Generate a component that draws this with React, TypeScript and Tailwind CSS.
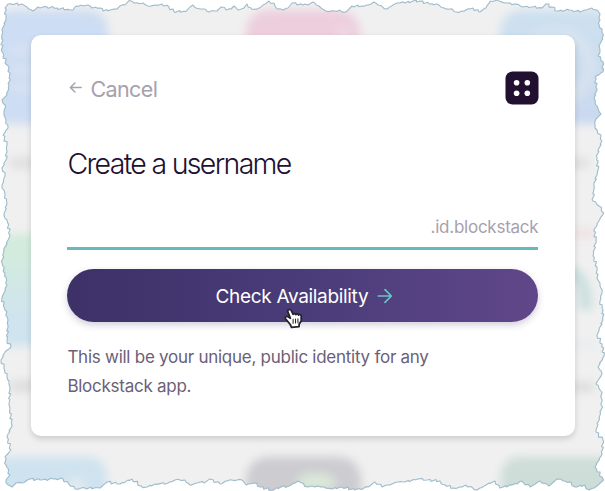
const edge: [number, number][] = [
  [5,8],[8,4],[22,4],[27,7],[33,11],[38,7],[47,7],[57,8],[70,10],[73,10],[76,6],[83,6],[88,5],[92,8],[100,8],[103,11],[117,9],[120,6],[125,5],[129,0.5],[134,3],[143,3],[148,6],[156,5],[162,4],[169,7],[174,11.5],[186,11.5],[190,7],[193,5],[196,8],[200,9],
  [203,9],[209,12],[214,11],[217,11],[221,7],[226,10],[231,9],[234,6],[238,10],[244,8],[247,4],[251,8],[255,9],[259,8],[265,4],[269,1],[275,6],[277,9],[281,9],[283,10],[288,8],[292,3],[297,5],[303,5],[305,4],[308,5],[313,2],[319,6],[326,11],[335,11],[340,10],[346,12],[352,6],[362,6],[367,5],[371,4],[374,2],[378,5],[387,9],[393,5],[399,3],
  [405,3],[413,1],[420,1],[429,4],[437,4],[444,8],[453,10],[457,12],[462,11],[473,8],[479,12],[486,8],[490,1],[499,1],[505,3],[515,4],[523,7],[532,7],[542,8],[546,4],[552,7],[558,11],[569,10],[580,12],[585,10],[592,8],[598,11],[600,14],
  [600,20],[599,24],[602,29],[603.5,35],[601,42],[599,46],[600,52],[598,56],[603,62],[602,68],[603,72],[595,77],[597,89],[594,98],[597,106],[601,114],[596,119],[595,124],[597,130],[601,135],[602,141],[599,148],[597,157],[598,170],[594,185],[593,201],[599,206],[603.5,213],[597,224],[594,231],[596,240],[593,256],[597,267],[597,278],[600,283],[602,293],[600,301],[603,310],[603,320],[597,335],[602,344],[604,356],[598,367],[602,374],[596,384],[601,391],[602,406],[599,418],[596,432],[603,440],[602,454],[595,467],[602,477],[603.5,480],
  [597,486],[589,490],[585,485],[575,487],[571,482],[565,481],[561,479],[557,479],[549,486],[540,481],[530,487],[521,481],[517,484],[512,485],[503,487],[500,488],[495,481],[486,485],[477,490],[466,485],[460,487],[454,488],[445,485],[440,481],[427,480],[418,479],[405,482],
  [398,482],[388,485],[382,487],[375,482],[368,487],[360,489],[355,490],[342,487],[332,489],[324,487],[318,486],[308,487],[298,481],[289,486],[281,487],[272,490],[260,487],[254,483],[246,485],[242,480],[232,480],[227,481],[220,484],[210,479],[204,483],[200,482],
  [197,483],[190,485],[185,480],[175,480],[168,483],[155,484],[147,487],[141,486],[132,479],[120,484],[107,482],[100,488],[85,488],[75,489],[63,479],[53,479],[40,480],[30,479],[22,483],[16,483],[12,487],[7,484],[6,480],
  [10,475],[6,465],[5,457],[11,450],[7,437],[12,425],[9,405],[10,390],[9,384],[7,377],[4,368],[1,360],[5,352],[11,347],[7,340],[8,320],[5,310],[2,298],[7,285],[5,273],[2,263],[4,250],[10,235],[7,220],[4,215],[7,204],[5,195],[2,185],[5,176],[2,168],[6,160],[7,145],[3,135],[8,128],[6,120],[4,115],[5,105],[2,100],[7,95],[9,85],[10,73],[7,65],[2,52],[2,30],[6,20],
];

// Break long segments into small, repeatable nicks so the paper looks torn.
function tear(points: [number, number][]) {
  const out: string[] = [];
  points.forEach(([x, y], i) => {
    const [nx, ny] = points[(i + 1) % points.length];
    const steps = Math.max(1, Math.round(Math.hypot(nx - x, ny - y) / 2.6));
    out.push(`${x} ${y}`);
    for (let s = 1; s < steps; s++) {
      const wobble = Math.sin(i * 12.9 + s * 2.6) * 1.1;
      const px = x + ((nx - x) * s) / steps + wobble;
      const py = y + ((ny - y) * s) / steps - wobble;
      out.push(`${px.toFixed(1)} ${py.toFixed(1)}`);
    }
  });
  return `M${out.join("L")}Z`;
}

const outline = tear(edge);

function Backdrop() {
  return (
    <svg className="absolute inset-0" width="605" height="491" viewBox="0 0 605 491">
      <defs>
        <clipPath id="paper"><path d={outline} /></clipPath>
        <filter id="soft" x="-30%" y="-30%" width="160%" height="160%"><feGaussianBlur stdDeviation="5" /></filter>
        <linearGradient id="mint" x1="0" y1="0" x2="0" y2="1">
          <stop offset=".15" stopColor="#d2ebdc" /><stop offset=".75" stopColor="#cfe4ef" />
        </linearGradient>
        <linearGradient id="sky" x1="0" y1="0" x2="0" y2="1">
          <stop offset=".2" stopColor="#cce0ef" /><stop offset="1" stopColor="#c9d8ef" />
        </linearGradient>
      </defs>
      <g clipPath="url(#paper)">
        <rect width="605" height="491" fill="#f0f0f0" />
        <g filter="url(#soft)">
          <rect x="-8" y="10" width="116" height="114" rx="20" fill="#cdddf3" />
          <path d="M8 50h30M8 70h30M8 88h30" stroke="#d8e3f4" strokeWidth="8" />
          <rect x="246" y="10" width="114" height="112" rx="22" fill="#edcedd" />
          <circle cx="344" cy="34" r="8" fill="#f0d8e3" />
          <rect x="500" y="10" width="116" height="114" rx="22" fill="url(#sky)" />
          <circle cx="556" cy="66" r="34" fill="none" stroke="#d7e2ef" strokeWidth="13" />
          <rect x="-8" y="234" width="116" height="112" rx="18" fill="url(#mint)" />
          <path d="M10 163H70" stroke="#dfdfdf" strokeWidth="11" />
          <path d="M10 386H70" stroke="#dddddd" strokeWidth="11" />
          <path d="M548 163H588" stroke="#dedede" strokeWidth="10" />
          <path d="M548 387H594" stroke="#dddddd" strokeWidth="10" />
          <path d="M545 233H596" stroke="#f0dfe1" strokeWidth="8" />
          <path d="M563 272Q586 270 586 310" fill="none" stroke="#cadedf" strokeWidth="13" />
          <path d="M550 345H595" stroke="#e5edee" strokeWidth="7" />
          <rect x="-8" y="457" width="115" height="80" rx="18" fill="#cee3ef" />
          <circle cx="76" cy="486" r="9" fill="#e4eaee" />
          <rect x="246" y="457" width="115" height="80" rx="22" fill="#ccccd1" />
          <ellipse cx="316" cy="482" rx="20" ry="9" fill="#dbe8d9" />
          <rect x="501" y="457" width="115" height="80" rx="18" fill="#cdddd8" />
        </g>
      </g>
      <path d={outline} fill="none" stroke="#9ebccb" strokeWidth="1.1" strokeLinejoin="bevel" />
    </svg>
  );
}

function Arrow({ className, d, size }: { className: string; d: string; size: number }) {
  return (
    <svg className={className} width={size} height={size} viewBox="0 0 16 16" fill="none" stroke="currentColor" strokeLinecap="round" strokeLinejoin="round">
      <path d={d} />
    </svg>
  );
}

function HandCursor() {
  return (
    <svg className="absolute left-[283px] top-[308px]" width="20" height="21" viewBox="0 0 19 21" preserveAspectRatio="none">
      <path d="M6 1.5C4.6 1.5 4.2 2.8 4.7 4L7 10.3 4.8 8.8C3.3 7.8 1.4 9.3 2.4 10.8L6.7 16.2 8.1 19.3 15.2 18.6 15.4 16 17.3 13V7.7C17 6.3 15.3 6.1 14.8 7.2 14.5 5.7 12.7 5.5 12.2 6.7 11.5 5.3 10.1 5.5 9.6 6.3L7.9 2.7C7.5 1.9 6.9 1.5 6 1.5Z" fill="#fff" stroke="#252229" strokeWidth="1.7" strokeLinejoin="round" />
      <path d="M9.6 11.3v4M11.9 11v4M14.2 10.8v4" stroke="#252229" strokeWidth="1" strokeLinecap="round" />
    </svg>
  );
}

export default function App() {
  return (
    <main className="relative h-[491px] w-[605px] overflow-hidden bg-white px-[31px] pt-[35px] font-['Inter',sans-serif]">
      <Backdrop />
      <section className="relative h-[401px] w-[544px] rounded-[10px] bg-white pl-[36.4px] pr-9 pt-9 shadow-[0_3px_6px_rgba(0,0,0,0.15)]">
        <header className="flex h-[34px] items-center justify-between">
          <button className="flex items-center gap-[7px] pl-[1px] text-[#a7a1ad]">
            <Arrow className="mb-px stroke-[1.6]" size={15} d="M14 8H2.5M7.4 3.2 2.5 8l4.9 4.8" />
            <span className="pt-px text-[21.5px] leading-[34px] tracking-[-0.6px]">Cancel</span>
          </button>
          <svg className="mr-[0.5px]" width="34" height="34" viewBox="0 0 34 34">
            <rect x=".5" y=".5" width="33" height="33" rx="7" fill="#211030" />
            <g fill="#fff"><circle cx="11.6" cy="11.7" r="2.8" /><circle cx="22.3" cy="11.7" r="2.8" /><circle cx="11.6" cy="22.3" r="2.8" /><circle cx="22.3" cy="22.3" r="2.8" /></g>
          </svg>
        </header>
        <h1 className="mt-[41px] h-9 whitespace-nowrap text-[28.5px] font-light leading-9 tracking-[-1.68px] text-[#211030]">Create a username</h1>
        <div className="mt-[26px] flex h-[42px] w-[471px] items-start justify-end border-b-[3px] border-[#67b9bd] pt-[7px] text-[17px] leading-6 tracking-[-0.25px] text-[#a7a1ad]">
          <span>.id.blockstack</span>
        </div>
        <button className="mt-[19px] flex h-[53px] w-[471px] items-center justify-center gap-[9px] rounded-full bg-linear-to-r from-[#3d3168] via-[#4a3c79] to-[#604789] pl-[3px] text-[19px] tracking-[-0.32px] text-white shadow-[0_3px_7px_rgba(61,49,104,0.24)]">
          <span className="pt-[3px]">Check Availability</span>
          <Arrow className="stroke-[1.7] text-[#67c5c6]" size={16} d="M1.3 8h13M8 1.7 14.3 8 8 14.3" />
        </button>
        <p className="mt-[21px] w-[400px] text-[17px] leading-[29px] tracking-[-0.26px] text-[#6b6078]">This will be your unique, public identity for any<br />Blockstack app.</p>
      </section>
      <HandCursor />
    </main>
  );
}
